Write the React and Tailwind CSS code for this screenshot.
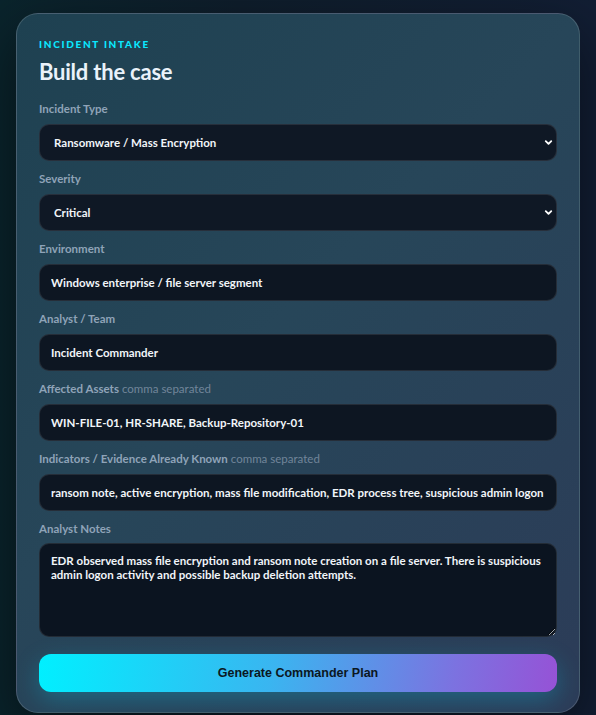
import { ChevronDown } from 'lucide-react';

const font = { fontFamily: 'Lato, "Open Sans", Arial, sans-serif' };

const fields = [
  { label: 'Environment', value: 'Windows enterprise / file server segment' },
  { label: 'Analyst / Team', value: 'Incident Commander' },
  {
    label: 'Affected Assets',
    hint: 'comma separated',
    value: 'WIN-FILE-01, HR-SHARE, Backup-Repository-01',
  },
  {
    label: 'Indicators / Evidence Already Known',
    hint: 'comma separated',
    value:
      'ransom note, active encryption, mass file modification, EDR process tree, suspicious admin logon activity',
  },
];

function Label({ children, hint }) {
  return (
    <label className="block text-[11.5px] font-bold leading-[14px] text-[#8fa3b8]">
      {children}
      {hint && <span className="font-normal text-[#71859a]"> {hint}</span>}
    </label>
  );
}

function Select({ label, value, options }) {
  return (
    <div className="flex flex-col gap-[8px]">
      <Label>{label}</Label>
      <div className="relative">
        <select
          defaultValue={value}
          className="h-[37px] w-full appearance-none rounded-[10px] border border-white/10 bg-[#0f1825] px-[14px] text-[11.5px] font-bold text-[#f1f5f9] outline-none"
          style={font}
        >
          {options.map((o) => (
            <option key={o}>{o}</option>
          ))}
        </select>
        <ChevronDown
          className="pointer-events-none absolute right-[3px] top-[13px] h-[11px] w-[11px] text-white"
          strokeWidth={4}
        />
      </div>
    </div>
  );
}

export default function App() {
  return (
    <div
      className="min-h-[715px] w-full bg-[#0d1b27] bg-[linear-gradient(90deg,#0a242c_0%,#0f1e2c_40%,#121e34_100%)] px-[16px] pt-[13px]"
      style={font}
    >
      <div className="relative overflow-hidden rounded-[22px] border border-white/15 bg-[linear-gradient(135deg,#1e4151_0%,#274659_45%,#2c3c58_100%)] px-[22px] pb-[20px] pt-[24px] shadow-[0_20px_60px_rgba(0,0,0,0.5)]">
        <p className="text-[10px] font-black uppercase leading-[12px] tracking-[0.17em] text-[#0ae8ff]">
          Incident Intake
        </p>
        <h1 className="mt-[9px] text-[22px] font-bold leading-[26px] tracking-[-0.01em] text-[#eaf2fa]">
          Build the case
        </h1>

        <div className="mt-[17px] flex flex-col gap-[11px]">
          <Select
            label="Incident Type"
            value="Ransomware / Mass Encryption"
            options={[
              'Ransomware / Mass Encryption',
              'Business Email Compromise',
              'Data Exfiltration',
            ]}
          />
          <Select
            label="Severity"
            value="Critical"
            options={['Critical', 'High', 'Medium', 'Low']}
          />

          {fields.map((f) => (
            <div key={f.label} className="flex flex-col gap-[8px]">
              <Label hint={f.hint}>{f.label}</Label>
              <input
                defaultValue={f.value}
                className="h-[37px] w-full rounded-[10px] border border-white/10 bg-[#0d1622] px-[11px] text-[11.5px] font-bold text-[#f1f5f9] outline-none"
                style={font}
              />
            </div>
          ))}

          <div className="flex flex-col gap-[7px]">
            <Label>Analyst Notes</Label>
            <textarea
              defaultValue="EDR observed mass file encryption and ransom note creation on a file server. There is suspicious admin logon activity and possible backup deletion attempts."
              className="h-[94px] w-full resize-y rounded-[10px] border border-white/10 bg-[#0b1420] px-[11px] py-[10px] text-[11.5px] font-bold leading-[14px] text-[#f1f5f9] outline-none"
              style={font}
            />
          </div>
        </div>

        <button
          className="mt-[17px] h-[38px] w-full rounded-[12px] bg-[linear-gradient(100deg,#00f0ff_0%,#3ab5f0_45%,#7c72e0_80%,#9652d6_100%)] text-[12.5px] font-bold text-[#0b1722] shadow-[0_8px_24px_rgba(0,220,255,0.25)]"
          style={{ fontFamily: '"Liberation Sans", Arial, sans-serif' }}
        >
          Generate Commander Plan
        </button>
      </div>
    </div>
  );
}
